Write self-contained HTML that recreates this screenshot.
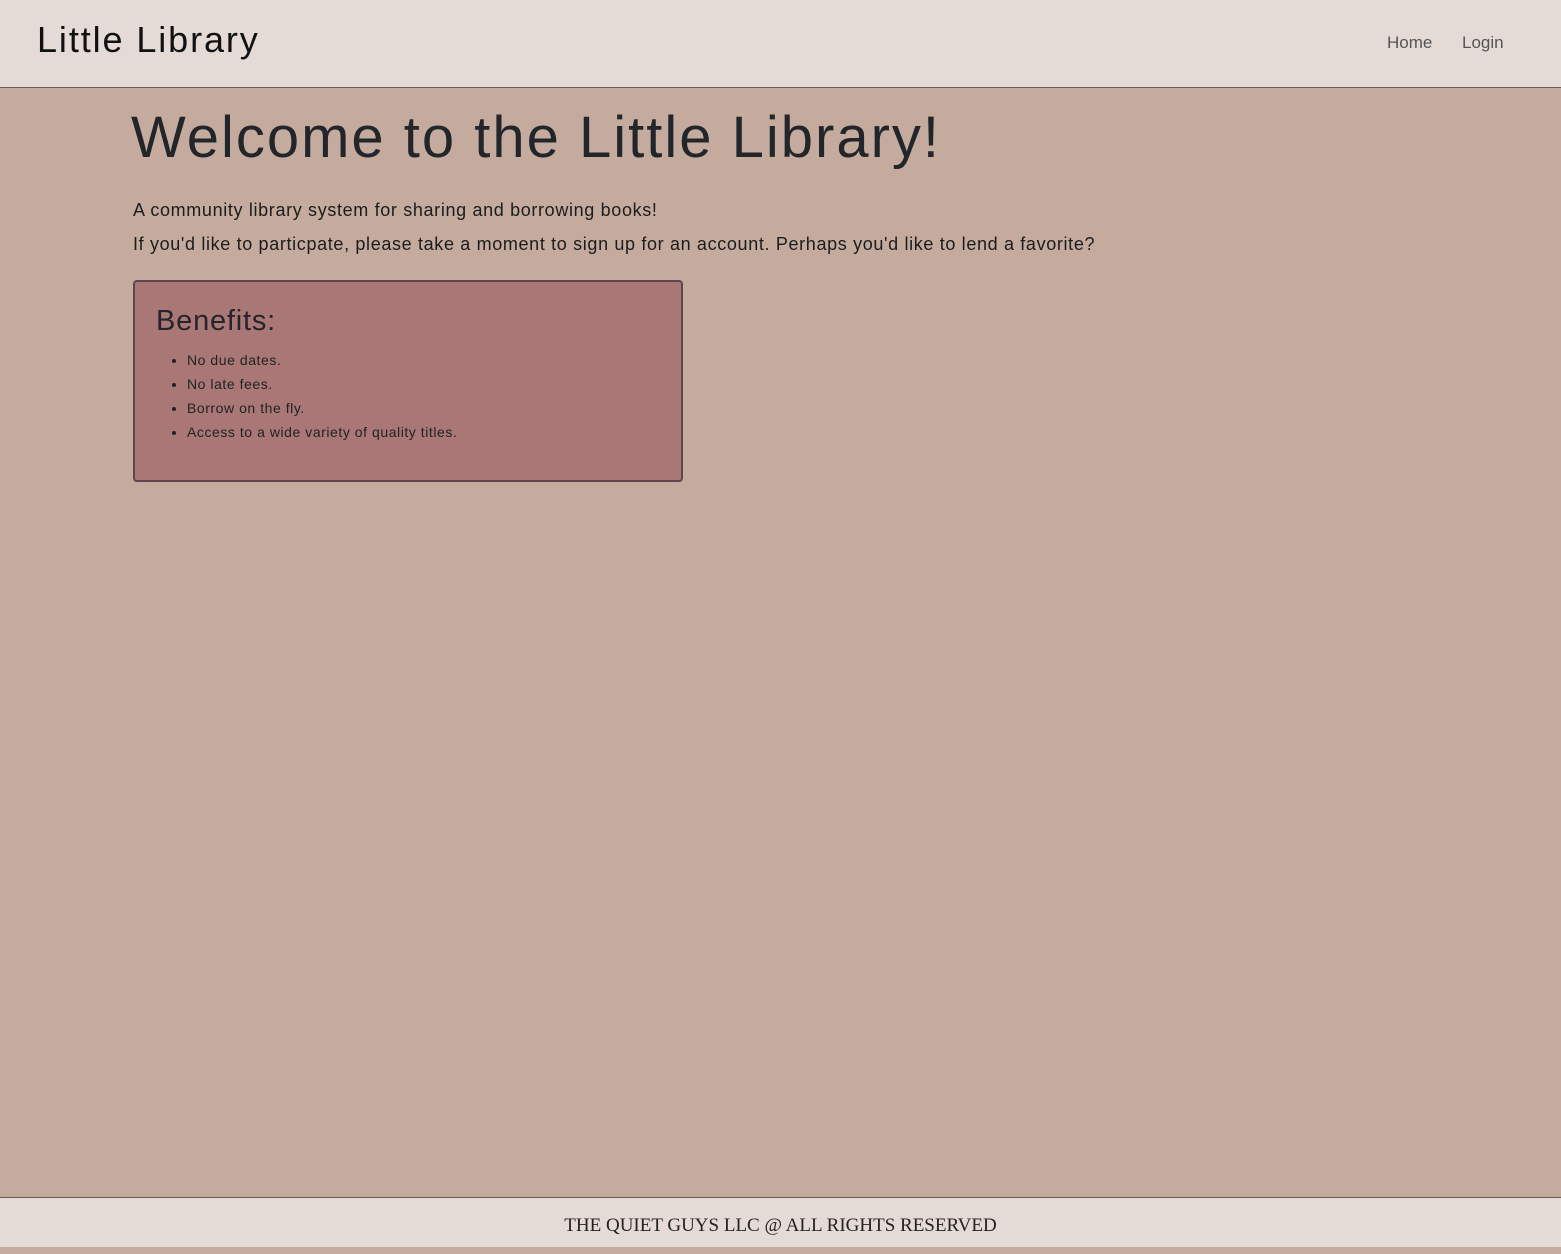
<!DOCTYPE html>
<html><head><meta charset="utf-8"><style>
html,body{margin:0;padding:0;}
body{width:1561px;height:1247px;background:#c4ab9e;font-family:"Liberation Sans",sans-serif;color:#212529;position:relative;overflow:hidden;}
.hdr{position:absolute;left:0;top:0;width:1561px;height:87px;background:#e4dbd6;border-bottom:1px solid #6b5a55;}
.brand{position:absolute;left:37px;top:19px;font-size:36px;color:#111;letter-spacing:1.9px;}
.nav{position:absolute;top:33px;font-size:17px;color:#555;}
h1{position:absolute;left:131px;top:104px;margin:0;font-weight:normal;font-size:58px;letter-spacing:2px;color:#22252a;}
.p{position:absolute;left:133px;font-size:18px;color:#1c1c1c;letter-spacing:0.65px;}
.box{position:absolute;left:133px;top:280px;width:546px;height:198px;background:#a97775;border:2px solid #5f4449;border-radius:4px;}
.box h2{position:absolute;left:21px;top:23px;margin:0;font-weight:normal;font-size:29px;color:#24242a;letter-spacing:0.8px;}
.box ul{position:absolute;left:14px;top:66px;margin:0;padding-left:38px;font-size:14px;line-height:24px;color:#222;letter-spacing:0.55px;}
.ftr{position:absolute;left:0;top:1197px;width:1561px;height:50px;box-sizing:border-box;background:#e4dbd6;border-top:1px solid #6b5a55;text-align:center;font-family:"Liberation Serif",serif;font-size:19px;line-height:56px;color:#222;}
</style></head><body>
<div class="hdr">
<div class="brand">Little Library</div>
<div class="nav" style="left:1387px">Home</div>
<div class="nav" style="left:1462px">Login</div>
</div>
<h1>Welcome to the Little Library!</h1>
<div class="p" style="top:200px">A community library system for sharing and borrowing books!</div>
<div class="p" style="top:234px">If you'd like to particpate, please take a moment to sign up for an account. Perhaps you'd like to lend a favorite?</div>
<div class="box">
<h2>Benefits:</h2>
<ul>
<li>No due dates.</li>
<li>No late fees.</li>
<li>Borrow on the fly.</li>
<li>Access to a wide variety of quality titles.</li>
</ul>
</div>
<div class="ftr">THE QUIET GUYS LLC @ ALL RIGHTS RESERVED</div>
</body></html>
